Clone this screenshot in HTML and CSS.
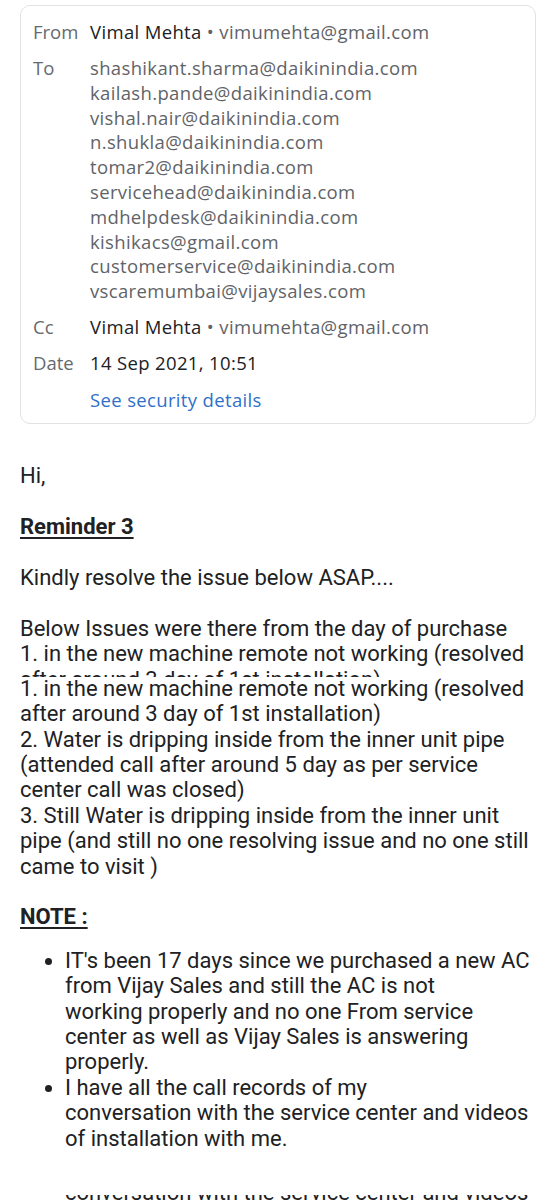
FILE: index.html
```html
<!DOCTYPE html>
<html lang="en">
<head>
<meta charset="utf-8">
<title>Reminder 3</title>
<link rel="stylesheet" href="styles.css">
</head>
<body>
<div class="card">
  <div class="row">
    <div class="label">From</div>
    <div class="value"><span class="name">Vimal Mehta</span> • vimumehta@gmail.com</div>
  </div>
  <div class="row">
    <div class="label">To</div>
    <div class="value">shashikant.sharma@daikinindia.com<br>kailash.pande@daikinindia.com<br>vishal.nair@daikinindia.com<br>n.shukla@daikinindia.com<br>tomar2@daikinindia.com<br>servicehead@daikinindia.com<br>mdhelpdesk@daikinindia.com<br>kishikacs@gmail.com<br>customerservice@daikinindia.com<br>vscaremumbai@vijaysales.com</div>
  </div>
  <div class="row">
    <div class="label">Cc</div>
    <div class="value"><span class="name">Vimal Mehta</span> • vimumehta@gmail.com</div>
  </div>
  <div class="row">
    <div class="label">Date</div>
    <div class="value name">14 Sep 2021, 10:51</div>
  </div>
  <div class="row">
    <div class="label"></div>
    <div class="value link">See security details</div>
  </div>
</div>

<div class="mail">
  <p>Hi,</p>
  <p><strong class="head">Reminder 3</strong></p>
  <p>Kindly resolve the issue below ASAP....</p>
  <div class="clip-top">
    Below Issues were there from the day of purchase<br>1. in the new machine remote not working (resolved<br>after around 3 day of 1st installation)
  </div>
  <p class="overlap">1. in the new machine remote not working (resolved<br>after around 3 day of 1st installation)<br>2. Water is dripping inside from the inner unit pipe<br>(attended call after around 5 day as per service<br>center call was closed)<br>3. Still Water is dripping inside from the inner unit<br>pipe (and still no one resolving issue and no one still<br>came to visit )</p>
  <p class="note-head"><strong class="head">NOTE :</strong></p>
  <ul class="notes">
    <li>IT's been 17 days since we purchased a new AC<br>from Vijay Sales and still the AC is not<br>working properly and no one From service<br>center as well as Vijay Sales is answering<br>properly.</li>
    <li>I have all the call records of my<br>conversation with the service center and videos<br>of installation with me.</li>
  </ul>
  <div class="clip-bottom">
    <div class="clip-bottom-line">conversation with the service center and videos</div>
  </div>
</div>
</body>
</html>
```

FILE: styles.css
```css
html, body {
  margin: 0;
  padding: 0;
  background: #ffffff;
}

body {
  overflow: hidden;
  height: 1200px;
}

.card {
  margin: 5px 19px 0 20px;
  border: 1px solid #e2e2e2;
  border-radius: 10px;
  padding: 14px 12px 11px 12px;
  font-family: "Open Sans", "Noto Sans", sans-serif;
  font-size: 18.5px;
  letter-spacing: 0.35px;
  line-height: 24.8px;
  color: #5f6368;
  display: flex;
  flex-direction: column;
  gap: 11.3px;
}

.row {
  display: grid;
  grid-template-columns: 57px 1fr;
}

.label {
  color: #666a6e;
  letter-spacing: 0;
}

.value {
  white-space: nowrap;
}

.name {
  color: #202124;
}

.link {
  color: #2f70c8;
}

.mail {
  padding: 39px 0 0 20px;
  font-family: Roboto, "Liberation Sans", sans-serif;
  font-size: 22px;
  line-height: 25.4px;
  color: #202124;
  white-space: nowrap;
}

.mail p {
  margin: 0 0 25.4px 0;
}

.head {
  font-weight: 700;
  text-decoration: underline;
  text-underline-offset: 3px;
}

.clip-top {
  height: 61px;
  overflow: hidden;
}

.mail p.overlap {
  margin-top: -1px;
}

.mail p.note-head {
  margin-bottom: 18px;
}

.notes {
  margin: 0;
  padding: 0 0 0 45px;
}

.clip-bottom {
  margin: 44px 0 0 45px;
  height: 9px;
  overflow: hidden;
}

.clip-bottom-line {
  margin-top: -15px;
}
```
